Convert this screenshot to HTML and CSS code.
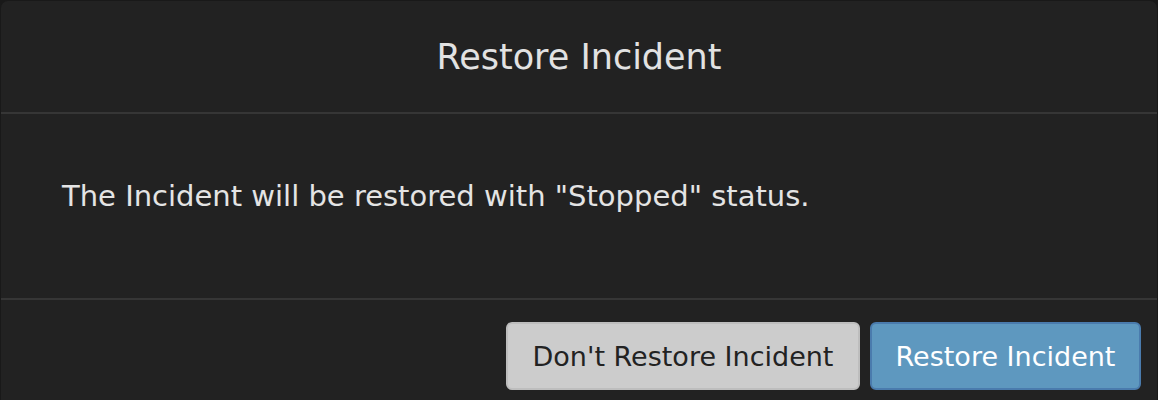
FILE: index.html
```html
<!DOCTYPE html>
<html>
<head>
<meta charset="utf-8">
<link rel="stylesheet" href="styles.css">
</head>
<body>
<div class="modal">
  <div class="modal-header"><h1 class="title">Restore Incident</h1></div>
  <div class="modal-body"><p class="message">The Incident will be restored with "Stopped" status.</p></div>
  <div class="modal-footer">
    <button class="btn btn-default">Don't Restore Incident</button>
    <button class="btn btn-primary">Restore Incident</button>
  </div>
</div>
</body>
</html>
```
FILE: styles.css
```css
html, body {
  margin: 0;
  padding: 0;
  background: #191919;
  height: 100%;
  overflow: hidden;
}
body {
  font-family: "DejaVu Sans", sans-serif;
  padding: 1px 1px 0 1px;
  box-sizing: border-box;
}
.modal {
  background: #222222;
  border-radius: 7px 7px 0 0;
  height: 399px;
  display: flex;
  flex-direction: column;
}
.modal-header {
  border-bottom: 2px solid #363636;
  display: flex;
  align-items: center;
  justify-content: center;
  box-sizing: border-box;
  height: 113px;
}
.title {
  margin: 0;
  font-size: 35px;
  font-weight: normal;
  color: #e2e2e2;
}
.modal-body {
  height: 186px;
  box-sizing: border-box;
  border-bottom: 2px solid #363636;
  padding: 65px 61px 0;
}
.message {
  margin: 0;
  font-size: 29px;
  color: #e4e4e4;
}
.modal-footer {
  display: flex;
  justify-content: flex-end;
  gap: 10px;
  padding: 22px 16px 0 0;
}
.btn {
  height: 68px;
  border-radius: 6px;
  font-family: inherit;
  font-size: 27px;
  padding: 0;
  white-space: nowrap;
  box-sizing: border-box;
}
.btn-default {
  background: #cccccc;
  border: 2px solid #bdbdbd;
  color: #222222;
  width: 354px;
}
.btn-primary {
  background: #5e98bf;
  border: 2px solid #4a7bad;
  color: #ffffff;
  width: 271px;
}
```
